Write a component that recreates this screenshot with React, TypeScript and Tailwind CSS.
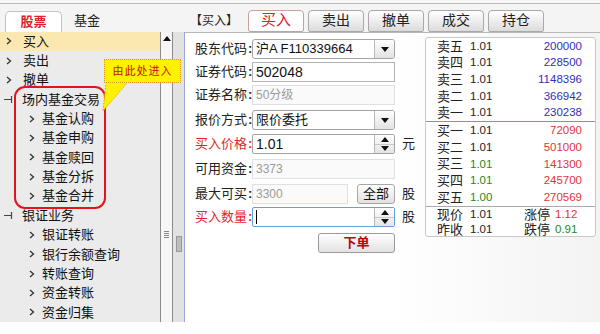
import React from 'react';

const font = { fontFamily: '"Liberation Sans", "Noto Sans CJK SC", sans-serif' };

type TreeItem = { text: string; level: 0 | 1; kind: 'leaf' | 'group'; active?: boolean };

const tree: TreeItem[] = [
  { text: '买入', level: 0, kind: 'leaf', active: true },
  { text: '卖出', level: 0, kind: 'leaf' },
  { text: '撤单', level: 0, kind: 'leaf' },
  { text: '场内基金交易', level: 0, kind: 'group' },
  { text: '基金认购', level: 1, kind: 'leaf' },
  { text: '基金申购', level: 1, kind: 'leaf' },
  { text: '基金赎回', level: 1, kind: 'leaf' },
  { text: '基金分拆', level: 1, kind: 'leaf' },
  { text: '基金合并', level: 1, kind: 'leaf' },
  { text: '银证业务', level: 0, kind: 'group' },
  { text: '银证转账', level: 1, kind: 'leaf' },
  { text: '银行余额查询', level: 1, kind: 'leaf' },
  { text: '转账查询', level: 1, kind: 'leaf' },
  { text: '资金转账', level: 1, kind: 'leaf' },
  { text: '资金归集', level: 1, kind: 'leaf' },
];

const sells = [
  ['卖五', '1.01', '200000'],
  ['卖四', '1.01', '228500'],
  ['卖三', '1.01', '1148396'],
  ['卖二', '1.01', '366942'],
  ['卖一', '1.01', '230238'],
];

const buys: [string, string, string, boolean][] = [
  ['买一', '1.01', '72090', false],
  ['买二', '1.01', '501000', false],
  ['买三', '1.01', '141300', true],
  ['买四', '1.01', '245700', true],
  ['买五', '1.00', '270569', true],
];

function Chevron() {
  return (
    <svg width="6" height="8" viewBox="0 0 6 8" className="shrink-0">
      <path d="M1 1 L4.5 4 L1 7" fill="none" stroke="#333" strokeWidth="1.3" />
    </svg>
  );
}

function Collapse() {
  return (
    <svg width="10" height="9" viewBox="0 0 10 9" className="shrink-0">
      <path d="M1 4.5 H8 M8.5 1 V8" fill="none" stroke="#444" strokeWidth="1.2" />
    </svg>
  );
}

function Tab({ label, active }: { label: string; active?: boolean }) {
  return (
    <div
      className={
        'flex h-[22px] w-[56px] items-center justify-center rounded-t-[4px] rounded-b-[2px] border ' +
        (active
          ? 'border-[#c9a0a0] bg-white text-[15px] text-[#e0202a]'
          : 'border-[#a9a9a9] bg-gradient-to-b from-white to-[#dcdcdc] text-[14px] text-[#222]')
      }
    >
      {label}
    </div>
  );
}

function Arrow({ up }: { up?: boolean }) {
  return (
    <svg width="8" height="5" viewBox="0 0 8 5">
      <path d={up ? 'M0 5 L4 0 L8 5 Z' : 'M0 0 L8 0 L4 5 Z'} fill="#111" />
    </svg>
  );
}

function Select({ value }: { value: string }) {
  return (
    <div className="flex h-[20px] w-[143px] shrink-0 items-stretch rounded-[3px] border border-[#a4a4a4] bg-white">
      <div className="flex flex-1 items-center pl-[3px] text-[13px] text-[#111]">{value}</div>
      <div className="flex w-[20px] items-center justify-center rounded-r-[2px] border-l border-[#b8b8b8] bg-gradient-to-b from-white to-[#e2e2e2]">
        <Arrow />
      </div>
    </div>
  );
}

function Spinner({ value, focus }: { value: string; focus?: boolean }) {
  return (
    <div
      className={
        'flex h-[20px] w-[143px] shrink-0 items-stretch rounded-[2px] border bg-white ' +
        (focus ? 'border-[#6aa0d8]' : 'border-[#a4a4a4]')
      }
    >
      <div className="flex flex-1 items-center pl-[3px] text-[14px] text-[#111]">
        {value}
        {focus && <span className="h-[14px] w-px bg-black" />}
      </div>
      <div className="flex w-[20px] flex-col border-l border-[#b8b8b8] bg-gradient-to-b from-white to-[#e4e4e4]">
        <div className="flex flex-1 items-center justify-center border-b border-[#c8c8c8]">
          <Arrow up />
        </div>
        <div className="flex flex-1 items-center justify-center">
          <Arrow />
        </div>
      </div>
    </div>
  );
}

function TextBox({ value, disabled, width = 'w-[143px]' }: { value: string; disabled?: boolean; width?: string }) {
  return (
    <div
      className={
        'flex h-[20px] shrink-0 items-center pl-[3px] ' +
        width +
        (disabled
          ? ' border border-[#e0e0e0] bg-[#fafafa] text-[12px] text-[#9a9a9a]'
          : ' border border-[#b4b4b4] bg-white text-[14px] text-[#111]')
      }
    >
      {value}
    </div>
  );
}

function Row({ label, red, children, unit, className }: { label: string; red?: boolean; children: React.ReactNode; unit?: string; className?: string }) {
  return (
    <div className={'flex h-[20px] items-center ' + (className ?? '')}>
      <div className={'flex w-[57px] shrink-0 whitespace-nowrap text-[13px] ' + (red ? 'text-[#e0262e]' : 'text-[#222]')}>
        <span>{label}</span>
        <span className="ml-[1px] font-bold">:</span>
      </div>
      {children}
      {unit && <div className="ml-[7px] text-[13px] text-[#222]">{unit}</div>}
    </div>
  );
}

export default function App() {
  return (
    <div className="relative h-[334px] w-[600px] overflow-hidden bg-white" style={font}>
      <div className="h-[4px] border-b border-[#bcbcbc] bg-[#f7f7f7]" />
      <div className="flex h-[318px]">
        {/* left navigation */}
        <div className="flex w-[185px] flex-col bg-[#ececec]">
          <div className="flex h-[29px] items-end bg-[#f4f4f4] pl-[5px]">
            <div className="flex h-[21px] w-[57px] items-center justify-center rounded-t-[5px] border border-b-0 border-[#c4c4c4] bg-white text-[13px] font-bold text-[#e0202a]">
              股票
            </div>
            <div className="flex h-[21px] w-[50px] items-center justify-center text-[13px] text-[#222]">基金</div>
          </div>
          <div className="flex flex-1">
            <div className="w-[160px] bg-[#ebebeb]">
              {tree.map((item) => (
                <div
                  key={item.text}
                  className={
                    'flex h-[19.36px] items-center text-[13px] text-[#111] ' +
                    (item.active ? 'bg-[#fbe8b0] ' : '') +
                    (item.level === 1 ? 'gap-[7px] pl-[29px]' : item.kind === 'group' ? 'gap-[9px] pl-[3px]' : 'gap-[11px] pl-[6px]')
                  }
                >
                  {item.kind === 'group' ? <Collapse /> : <Chevron />}
                  <span>{item.text}</span>
                </div>
              ))}
            </div>
            <div className="flex w-[13px] flex-col items-center border-x border-[#8c8c8c] bg-[#f6f6f6]">
              <div className="mt-[3px] flex h-[8px] items-center">
                <Arrow up />
              </div>
              <div className="mt-[188px] flex flex-col gap-[1px]">
                <div className="h-[1px] w-[5px] bg-[#888]" />
                <div className="h-[1px] w-[5px] bg-[#888]" />
                <div className="h-[1px] w-[5px] bg-[#888]" />
                <div className="h-[1px] w-[5px] bg-[#888]" />
              </div>
            </div>
            <div className="flex w-[12px] justify-center border-r border-[#9aa6d8] bg-[#e2e2e2]">
              <div className="mt-[204px] h-[16px] w-[6px] border border-[#999] bg-[#bdbdbd]" />
            </div>
          </div>
        </div>

        {/* right panel */}
        <div className="flex flex-1 flex-col">
          <div className="flex h-[29px] items-center gap-[4px] border-b border-[#b8b8b8] bg-[#f4f4f4] pl-[5px] pt-[5px]">
            <div className="mr-[6px] text-[12px] text-[#222]">【买入】</div>
            <Tab label="买入" active />
            <Tab label="卖出" />
            <Tab label="撤单" />
            <Tab label="成交" />
            <Tab label="持仓" />
          </div>
          <div className="flex flex-1 bg-gradient-to-r from-white via-white to-[#f3f3f3]">
            <div className="w-[240px] pl-[10px] pt-[6px]">
              <Row label="股东代码">
                <Select value="沪A F110339664" />
              </Row>
              <Row label="证券代码" className="mt-[3px]">
                <TextBox value="502048" />
              </Row>
              <Row label="证券名称" className="mt-[3px]">
                <TextBox value="50分级" disabled />
              </Row>
              <Row label="报价方式" className="mt-[5px]">
                <Select value="限价委托" />
              </Row>
              <Row label="买入价格" red unit="元" className="mt-[4px]">
                <Spinner value="1.01" />
              </Row>
              <Row label="可用资金" className="mt-[5px]">
                <TextBox value="3373" disabled />
              </Row>
              <Row label="最大可买" unit="股" className="mt-[5px]">
                <TextBox value="3300" disabled width="w-[96px]" />
                <div className="ml-[9px] flex h-[20px] w-[38px] shrink-0 items-center justify-center rounded-[3px] border border-[#a8a8a8] bg-gradient-to-b from-white to-[#e0e0e0] text-[13px] text-[#111]">
                  全部
                </div>
              </Row>
              <Row label="买入数量" red unit="股" className="mt-[3px]">
                <Spinner value="" focus />
              </Row>
              <div className="ml-[123px] mt-[6px] flex h-[20px] w-[77px] items-center justify-center rounded-[3px] border border-[#9a9a9a] bg-gradient-to-b from-white to-[#e2e2e2] text-[13px] font-bold text-[#c00000]">
                下单
              </div>
            </div>

            <div className="mt-[4px] h-[200px] w-[171px] rounded-[3px] border border-[#c8c8c8] bg-white text-[11.5px]">
              {sells.map(([l, p, v]) => (
                <div key={l} className="flex h-[16.7px] items-center pl-[11px] pr-[13px]">
                  <span className="w-[33px] text-[13px] text-[#222]">{l}</span>
                  <span className="text-[#222]">{p}</span>
                  <span className="ml-auto text-[#3030b8]">{v}</span>
                </div>
              ))}
              <div className="h-px bg-[#9c8c8c]" />
              {buys.map(([l, p, v, green]) => (
                <div key={l} className="flex h-[16.7px] items-center pl-[11px] pr-[13px]">
                  <span className="w-[33px] text-[13px] text-[#222]">{l}</span>
                  <span className={green ? 'text-[#1c8a24]' : 'text-[#222]'}>{p}</span>
                  <span className="ml-auto text-[#e3333b]">{v}</span>
                </div>
              ))}
              <div className="h-px bg-[#a8a8a8]" />
              <div className="flex h-[15px] items-center pl-[11px]">
                <span className="w-[33px] text-[13px] text-[#222]">现价</span>
                <span className="w-[54px] text-[#222]">1.01</span>
                <span className="w-[31px] text-[13px] text-[#222]">涨停</span>
                <span className="text-[#e3333b]">1.12</span>
              </div>
              <div className="flex h-[15px] items-center pl-[11px]">
                <span className="w-[33px] text-[13px] text-[#222]">昨收</span>
                <span className="w-[54px] text-[#222]">1.01</span>
                <span className="w-[31px] text-[13px] text-[#222]">跌停</span>
                <span className="text-[#1c8a24]">0.91</span>
              </div>
            </div>
          </div>
        </div>
      </div>

      {/* annotation overlay */}
      <div className="absolute left-[14px] top-[86px] h-[123px] w-[92px] rounded-[11px] border-[2.5px] border-[#e3141c]" />
      <svg className="absolute left-[100px] top-[78px]" width="34" height="36" viewBox="0 0 34 36">
        <path d="M6 4 L3 33 L28 4 Z" fill="#fff200" />
        <path d="M6 4 L3 33 L28 4" fill="none" stroke="#e09a20" strokeWidth="1" strokeDasharray="1.5 1.5" />
      </svg>
      <div className="absolute left-[104px] top-[59px] flex h-[24px] w-[77px] items-center justify-center border border-dotted border-[#e09a20] bg-[#fff200] text-[11px] tracking-[1px] text-[#c4101a]">
        由此处进入
      </div>
    </div>
  );
}
